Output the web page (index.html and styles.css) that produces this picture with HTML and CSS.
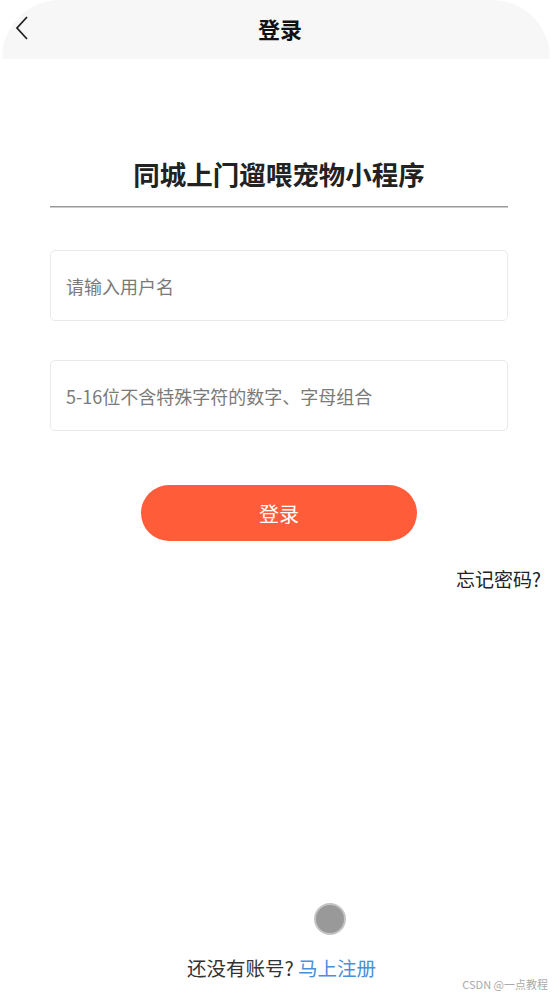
FILE: index.html
```html
<!DOCTYPE html>
<html lang="zh-CN">
<head>
  <meta charset="UTF-8" />
  <meta name="viewport" content="width=device-width, initial-scale=1.0" />
  <title>登录</title>
  <link rel="stylesheet" href="styles.css">
</head>
<body>
  <div class="page">
    <div class="navbar">
      <span class="back">
        <svg width="16" height="26" viewBox="0 0 16 26">
          <path d="M13 2 L3 13 L13 24" fill="none" stroke="#222" stroke-width="1.8" />
        </svg>
      </span>
      <span class="nav-title">登录</span>
    </div>

    <div class="content">
      <h2 class="app-title">同城上门遛喂宠物小程序</h2>
      <div class="divider"></div>

      <div class="field">
        <input type="text" placeholder="请输入用户名" />
      </div>
      <div class="field">
        <input type="password" placeholder="5-16位不含特殊字符的数字、字母组合" />
      </div>

      <button class="login-btn">登录</button>
      <div class="forgot">忘记密码?</div>
    </div>

    <div class="footer">
      <div class="dot"></div>
      <div class="register">还没有账号? <a href="#">马上注册</a></div>
      <div class="mark">CSDN @一点教程</div>
    </div>
  </div>
</body>
</html>
```

FILE: styles.css
```css
body {
  margin: 0;
  font-family: "Noto Sans CJK SC", "Noto Sans", sans-serif;
  background: #fff;
  color: #222;
}
.page {
  width: 552px;
  height: 998px;
  display: flex;
  flex-direction: column;
}
.navbar {
  margin: 0 2px;
  height: 59px;
  background: #f7f7f7;
  border-radius: 58px 58px 0 0;
  display: flex;
  align-items: center;
  justify-content: center;
  position: relative;
}
.back {
  position: absolute;
  left: 12px;
  top: 15px;
}
.nav-title {
  font-size: 22px;
  font-weight: bold;
  color: #111;
  margin: -4px 0 0 8px;
}
.content {
  padding: 0 44px 0 50px;
  display: flex;
  flex-direction: column;
}
.app-title {
  margin: 95px 0 0;
  text-align: center;
  font-size: 26.5px;
  line-height: 40px;
  font-weight: bold;
  color: #222;
}
.divider {
  margin-top: 12px;
  height: 1px;
  background: #999;
  border-bottom: 1px solid #ccc;
}
.field {
  margin-top: 42px;
  height: 71px;
  border: 1px solid #e9e9e9;
  border-radius: 5px;
  box-sizing: border-box;
  display: flex;
  align-items: center;
}
.field + .field {
  margin-top: 39px;
}
.field input {
  border: none;
  outline: none;
  width: 100%;
  padding: 0 15px;
  font-family: inherit;
  font-size: 18px;
  color: #333;
  background: transparent;
}
.field input::placeholder {
  color: #7a7a7a;
}
.login-btn {
  margin: 54px auto 0;
  width: 276px;
  height: 56px;
  border: none;
  border-radius: 28px;
  background: #ff5d3a;
  color: #fff;
  font-family: inherit;
  font-size: 20px;
  cursor: pointer;
}
.forgot {
  margin: 24px -33px 0 0;
  text-align: right;
  font-size: 19px;
  color: #222;
}
.footer {
  margin-top: auto;
  display: flex;
  flex-direction: column;
  align-items: center;
  position: relative;
  padding-bottom: 16px;
}
.dot {
  width: 28px;
  height: 28px;
  border-radius: 50%;
  background: #999;
  border: 2px solid #c4c4c4;
  margin-left: 108px;
}
.register {
  margin: 18px 0 0 11px;
  font-size: 19.5px;
  color: #333;
}
.register a {
  color: #4a8fd9;
  text-decoration: none;
}
.mark {
  position: absolute;
  right: 4px;
  bottom: 6px;
  font-size: 11px;
  color: #aaa;
}
```
